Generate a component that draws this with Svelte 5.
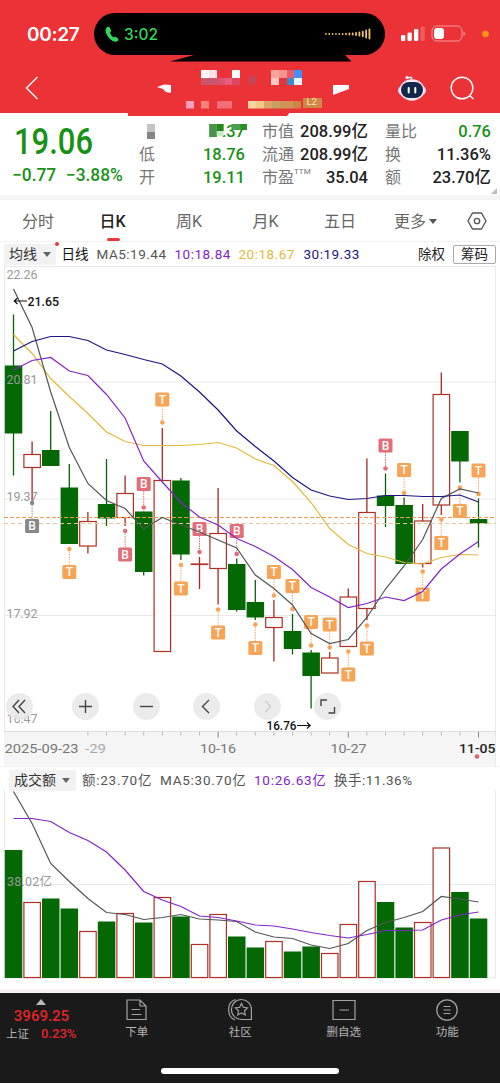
<script>
	const STEP = 18.6;
	const x = (i) => 13.5 + i * STEP;

	// [up, high, top, bottom, low]
	const candles = [
		[0, 314.5, 365.5, 433.5, 475.5],
		[1, 441.5, 454.5, 467.5, 503],
		[0, 411, 450, 466, 466],
		[0, 464, 487.5, 544, 544],
		[1, 512, 521.5, 546, 553.5],
		[0, 459, 504, 518.5, 526],
		[1, 475.5, 493.5, 517.5, 526],
		[0, 511.5, 511.5, 572, 575.5],
		[1, 428, 480.5, 651.5, 651.5],
		[0, 478, 480.5, 554.5, 560],
		[1, 557, 564, 564.5, 589],
		[1, 488, 533.5, 568.5, 604.5],
		[0, 558.5, 564, 610, 611.5],
		[0, 580, 602, 617.5, 620],
		[1, 600, 617.5, 627.5, 661.5],
		[0, 614, 631, 649, 654.5],
		[0, 650, 652.5, 676, 708.5],
		[1, 652, 658, 673, 673],
		[1, 588.5, 597, 646.5, 646.5],
		[1, 458.5, 512.5, 608.5, 620],
		[0, 473.5, 495.5, 506, 527],
		[0, 497.5, 505, 564, 564],
		[1, 504, 521, 563.5, 567.5],
		[1, 372.5, 394.5, 505, 515],
		[0, 431, 431, 461.5, 482.5],
		[0, 498.5, 519, 523.5, 547.5]
	];

	const volumeTops = [
		850, 902.5, 898.5, 908.5, 931.5, 921.5, 913.5, 922.5, 897.5, 916.5, 944.5, 914.5, 936.5,
		947.5, 941.5, 951.5, 946.5, 953.5, 924.5, 881.5, 902, 927.5, 922.5, 848, 892, 918.5
	];

	const priceLines = [
		{ color: '#e3b93c', ys: [334.5, 353.5, 378.5, 396.5, 413.5, 432, 441.5, 445.5, 445.5, 445.5, 444.5, 442.5, 448, 459, 465.5, 481.5, 502.5, 528.5, 544.5, 553.5, 557, 562.5, 564, 557.5, 554.5, 555] },
		{ color: '#555', ys: [289, 327.5, 392, 447.5, 483.5, 500.5, 508.5, 529, 517.5, 525, 532, 540, 548, 575, 588.5, 605, 633.5, 643.5, 639.5, 617.5, 589, 566, 539.5, 498.5, 489, 493] },
		{ color: '#8424cc', ys: [370, 360.5, 357.5, 371, 375.5, 394.5, 418, 461, 482, 502.5, 517, 525, 538.5, 546.5, 556.5, 569.5, 587.5, 597, 607.5, 603.5, 597, 600.5, 591.5, 569, 554, 541.5] },
		{ color: '#1d1583', ys: [351, 341.5, 336.5, 336.5, 340.5, 350, 354.5, 359.5, 364, 376, 392, 410, 431, 446.5, 461, 477.5, 490, 496, 499.5, 498.5, 495.5, 495.5, 496.5, 496.5, 495, 502] }
	];

	const volumeLines = [
		{ color: '#555', ys: [791.5, 823.5, 863.5, 881.5, 898.5, 912.5, 914.5, 919.5, 917.5, 914.5, 919, 920, 921.5, 932, 937, 938.5, 945, 948.5, 943.5, 930.5, 922.5, 917.5, 911.5, 896.5, 899, 902] },
		{ color: '#8424cc', ys: [818.5, 818.5, 821.5, 832.5, 840.5, 852, 870, 891.5, 900, 906.5, 916, 917.5, 921, 925, 926, 929, 932.5, 935.5, 938, 934.5, 930.5, 930.5, 930, 920, 915, 912] }
	];

	// [candle index, label, badge y, dot y]
	const marks = [
		[1, 'B', 526, 503, 'past'],
		[3, 'T', 572, 549],
		[6, 'B', 554.5, 531],
		[7, 'B', 484, 507.5],
		[8, 'T', 399.5, 422.5],
		[9, 'T', 588.5, 565],
		[10, 'B', 529, 552],
		[11, 'T', 632.5, 609.5],
		[12, 'B', 531, 554],
		[13, 'T', 648, 624.5],
		[14, 'T', 572, 595.5],
		[15, 'T', 586, 609],
		[16, 'T', 622, 645.5],
		[17, 'T', 624.5, 647.5],
		[18, 'T', 674.5, 651.5],
		[19, 'T', 648.5, 625.5],
		[20, 'B', 445.5, 468.5],
		[21, 'T', 470, 493],
		[22, 'T', 594.5, 571.5],
		[23, 'T', 543, 519.5],
		[24, 'T', 511, 487.5],
		[25, 'T', 470.5, 494]
	];

	const ticks = Array.from({ length: 22 }, (_, i) => i + 4);
	const points = (ys) => ys.map((y, i) => `${x(i)},${y}`).join(' ');

	// [x, y, width, height, colour]
	const mosaic = [
		[201, 70, 8, 8, '#fff6f5'], [209, 70, 8, 8, '#fde1e6'], [232, 70, 8, 8, '#fff'],
		[201, 78, 16, 7, '#c9566c'], [217, 78, 8, 7, '#d8566c'], [225, 78, 8, 7, '#ed5a80'], [232, 78, 8, 7, '#d9485e'],
		[248, 76, 8, 8, '#c54656'],
		[271, 70, 8, 8, '#f9a29e'], [279, 70, 8, 8, '#f7938d'], [287, 70, 8, 8, '#ed5965'], [294, 70, 8, 8, '#418dfa'],
		[271, 78, 8, 7, '#ffc7bf'], [279, 78, 8, 7, '#e43438'], [287, 78, 8, 7, '#3d88cf'], [294, 78, 8, 7, '#e5f4ff'],
		[186, 101, 8, 7.5, '#f99cc0'], [201, 101, 8, 7.5, '#f4817d'], [217, 101, 15, 7.5, '#f36e78'],
		[248, 101, 8, 7.5, '#fbd2a0'], [256, 101, 8, 7.5, '#f5c787'], [264, 101, 8, 7.5, '#dfa369'],
		[272, 101, 8, 7.5, '#c3a265'], [280, 101, 13, 7.5, '#d19255'], [293, 101, 8, 7.5, '#cd8544'],
		[303, 98, 19, 10, '#cd8947']
	];
</script>

<div class="screen">
	<header>
		<svg class="shards" width="500" height="120">
			<path d="M170 61.5 194 55H345l6.500 6.500Z" fill="#000" />
			<path d="M128 112h162l-3 4H128Z" fill="#eb3236" />
			<path d="M157 87l7-2.500 7 .5v8l-5-1-3-3ZM333 85h16v4l-16 6Z" fill="#fff" />
			{#each mosaic as [mx, my, w, h, fill]}
				<rect x={mx} y={my} width={w} height={h} {fill} />
			{/each}
			<text x="306.500" y="105" class="l2">L2</text>
		</svg>
		<div class="status">
			<span class="clock">00:27</span>
			<div class="island">
				<svg width="14" height="17" viewBox="0 0 14 17"><path d="M1 2.500C2 .5 4 .3 4.800 1.600L6 4.200c.4 1.200-1 1.800-.8 2.800.5 1.700 1.600 3.200 2.900 4.200.9.500 1.600-.8 2.700-.2l2 1.300c1.200.9.4 2.600-1 3.300C7.500 17.500-1.500 8 1 2.500Z" fill="#32d75b" /></svg>
				<span>3:02</span>
				<svg class="wave" width="46" height="12">
					{#each [2, 2, 2, 2, 2, 2, 2.5, 3, 3, 4, 5, 6.5, 9, 11] as h, i}
						<rect x={i * 3.35} y={6 - h / 2} width="1.800" height={h} rx=".9" fill="#f0c36a" />
					{/each}
				</svg>
			</div>
			<svg class="signal" width="90" height="18" viewBox="0 0 90 18">
				<g fill="#fff">
					<rect x="0" y="10" width="4.300" height="6" rx="1.300" />
					<rect x="6.500" y="7.500" width="4.300" height="8.500" rx="1.300" />
					<rect x="13" y="4" width="4.300" height="12" rx="1.300" />
					<rect x="19.500" y="1.500" width="4.300" height="14.500" rx="1.300" opacity=".2" />
					<rect x="33" y="3" width="10" height="11" rx="3" />
					<path d="M62.500 6.500v4.500c2-1 2-3.500 0-4.500" opacity=".5" />
				</g>
				<rect x="31" y="1" width="30" height="15" rx="4.800" fill="none" stroke="#fff" stroke-opacity=".5" />
				<circle cx="84.500" cy="9" r="3.300" fill="#ff9419" />
			</svg>
		</div>
		<nav>
			<svg width="14" height="24" viewBox="0 0 14 24"><path d="M12.500 1 1.500 12l11 11" fill="none" stroke="#fff" stroke-width="1.400" /></svg>
			<div class="tools">
				<svg width="28" height="27" viewBox="0 0 28 27">
					<path d="M9 2.500h4.500v4" fill="none" stroke="#eadff0" stroke-width="1.500" />
					<circle cx="9" cy="2.500" r="1.500" fill="#fff" />
					<rect x="0" y="11" width="28" height="9" rx="4.500" fill="#d9d5ff" />
					<ellipse cx="14" cy="15" rx="12.500" ry="10.700" fill="#f7e9f4" />
					<rect x="3" y="7" width="22" height="16" rx="8" fill="#13274d" />
					<path d="M10.700 13v4.500M17.300 13v4.500" stroke="#fff" stroke-width="2" stroke-linecap="round" />
				</svg>
				<svg width="25" height="25" viewBox="0 0 25 25"><circle cx="12" cy="12" r="10.800" fill="none" stroke="#fff" stroke-width="1.400" /><path d="m19.500 19.500 4 3.500" stroke="#fff" stroke-width="1.400" /></svg>
			</div>
		</nav>
	</header>

	<section class="quote">
		<div class="last down">
			<b>19.06</b>
			<p><span>−0.77</span><span>−3.88%</span></p>
		</div>
		<dl class="range">
			<dt><i class="block"></i></dt>
			<dd class="down masked">.37
				<svg width="40" height="14"><path d="M0 0h8v13H0z" fill="#4b944b" /><path d="M8 0h7v7H8z" fill="#24891f" /><path d="M8 7h7v5H8z" fill="#c6edc7" /><path d="M23 0h9v6h-9z" fill="#4d9d4f" /><path d="M32 0h7v6h-7z" fill="#219121" /></svg>
			</dd>
			<dt>低</dt><dd class="down">18.76</dd>
			<dt>开</dt><dd class="down">19.11</dd>
		</dl>
		<dl class="cap">
			<dt>市值</dt><dd>208.99亿</dd>
			<dt>流通</dt><dd>208.99亿</dd>
			<dt>市盈<sup>TTM</sup></dt><dd>35.04</dd>
		</dl>
		<dl class="turn">
			<dt>量比</dt><dd class="down">0.76</dd>
			<dt>换</dt><dd>11.36%</dd>
			<dt>额</dt><dd>23.70亿</dd>
		</dl>
		<i class="corner"></i>
	</section>

	<div class="tabs">
		<span>分时</span>
		<span class="active">日K</span>
		<span>周K</span>
		<span>月K</span>
		<span>五日</span>
		<span>更多<i></i></span>
		<svg width="20" height="18" viewBox="0 0 20 18"><path d="M5.500 1h9L19 9l-4.500 8h-9L1 9Z" fill="none" stroke="#555" stroke-width="1.400" stroke-linejoin="round" /><circle cx="10" cy="9" r="2.700" fill="none" stroke="#555" stroke-width="1.300" /></svg>
	</div>

	<div class="legend">
		<span class="pick">均线<i></i></span>
		<span class="name">日线</span>
		<span class="ma5">MA5:19.44</span>
		<span class="ma10">10:18.84</span>
		<span class="ma20">20:18.67</span>
		<span class="ma30">30:19.33</span>
		<span class="right">除权</span>
		<span class="chip">筹码</span>
	</div>

	<div class="chart">
		<svg width="500" height="500" viewBox="0 266 500 500">
			<rect x="4" y="731.500" width="492" height="34" fill="#f5f5f5" />
			<path d="M4.500 266v466M495.500 266v500M4 266.500h492M4 382h492M4 499h492M4 615.500h492" stroke="#e9e9e9" fill="none" />
			<path d="M4 731.500h492" stroke="#ddd" />
			{#each candles as [up, high, top, bottom, low], i}
				{#if up}
					<path d="M{x(i)} {high}V{top}M{x(i)} {bottom}V{low}" stroke="#a52a24" stroke-width="1.300" />
					<rect x={x(i) - 8.2} y={top} width="16.500" height={bottom - top} fill="#fff" stroke="#ad2f26" stroke-width="1.200" />
				{:else}
					<path d="M{x(i)} {high}V{low}" stroke="#0a5f0a" stroke-width="1.300" />
					<rect x={x(i) - 8.7} y={top} width="17.500" height={bottom - top} fill="#046804" />
				{/if}
			{/each}
			<path class="now" d="M4 517.500h492" />
			<path class="now cost" d="M4 523.500h492" />
			{#each marks as [i, label, y, dot, past]}
				<g class="mark {label} {past}">
					<path d="M{x(i)} {dot}V{y}" stroke-dasharray="1.500 1" />
					<circle cx={x(i)} cy={dot} r="2.300" />
					<rect x={x(i) - 7} y={y - 7} width="14" height="14" rx="1.500" />
					<text x={x(i)} y={y + 4.2} text-anchor="middle">{label}</text>
				</g>
			{/each}
			{#each priceLines as line}
				<polyline points={points(line.ys)} fill="none" stroke={line.color} stroke-width="1.200" />
			{/each}
			<g class="scale">
				<text x="6.500" y="279" textLength="31">22.26</text>
				<text x="6.500" y="384" textLength="31">20.81</text>
				<text x="6.500" y="501" textLength="31">19.37</text>
				<text x="6.500" y="618" textLength="31">17.92</text>
				<text x="6.500" y="722.500" textLength="31">16.47</text>
			</g>
			<g class="peak">
				<path d="M14.500 301H27M17.500 298l-3.200 3 3.200 3M297 725.500h13M307 722.500l3.200 3-3.200 3" fill="none" stroke="#111" stroke-width="1.200" />
				<text x="27.500" y="305.500" textLength="31.500" lengthAdjust="spacingAndGlyphs">21.65</text>
				<text x="266.500" y="730" textLength="30" lengthAdjust="spacingAndGlyphs">16.76</text>
			</g>
			{#each ticks as i}
				<path d="M{x(i)} 732v{i === 11 || i === 18 || i === 25 ? 5.5 : 3.5}" stroke={i === 11 || i === 18 || i === 25 ? '#888' : '#bbb'} />
			{/each}
			<g class="dates">
				<text x="4.500" y="752.500" textLength="74" lengthAdjust="spacingAndGlyphs">2025-09-23</text>
				<text x="85" y="752.500" textLength="21" lengthAdjust="spacingAndGlyphs" fill="#aaa">-29</text>
				<text x="200" y="752.500" textLength="36" lengthAdjust="spacingAndGlyphs">10-16</text>
				<text x="330.500" y="752.500" textLength="36" lengthAdjust="spacingAndGlyphs">10-27</text>
				<text x="459" y="752.500" textLength="36.500" lengthAdjust="spacingAndGlyphs" class="today">11-05</text>
			</g>
			<circle cx="477" cy="756.500" r="2.300" fill="#e0606a" />
		</svg>
		<div class="controls">
			<button aria-label="first"><svg viewBox="0 0 27 27"><path d="m13 7-6 6.500 6 6.500M19 7l-6 6.500 6 6.500" /></svg></button>
			<button aria-label="zoom in"><svg viewBox="0 0 27 27"><path d="M7 13.500h13M13.500 7v13" /></svg></button>
			<button aria-label="zoom out"><svg viewBox="0 0 27 27"><path d="M7 13.500h13" /></svg></button>
			<button aria-label="previous"><svg viewBox="0 0 27 27"><path d="m16 7-6.500 6.500L16 20" /></svg></button>
			<button aria-label="next" class="off"><svg viewBox="0 0 27 27"><path d="m11.500 8 5 5.500-5 5.500" /></svg></button>
			<button aria-label="full screen"><svg viewBox="0 0 27 27"><path d="M7 13V7h6M14.500 20h6v-6" /></svg></button>
		</div>
	</div>

	<div class="legend volume">
		<span class="pick">成交额<i></i></span>
		<span class="amount">额:23.70亿</span>
		<span class="vol5">MA5:30.70亿</span>
		<span class="vol10">10:26.63亿</span>
		<span class="rate">换手:11.36%</span>
	</div>

	<svg class="bars" width="500" height="203" viewBox="0 790 500 203">
		<path d="M4.500 766v212M495.500 766v212M4 884.500h492M4 978h492" stroke="#e9e9e9" fill="none" />
		<rect x="0" y="989" width="500" height="4" fill="#f6f3f4" />
		{#each volumeTops as top, i}
			{#if candles[i][0]}
				<rect x={x(i) - 8.2} y={top} width="16.500" height={977.5 - top} fill="#fff" stroke="#ad2f26" stroke-width="1.200" />
			{:else}
				<rect x={x(i) - 8.7} y={top} width="17.500" height={978 - top} fill="#046804" />
			{/if}
		{/each}
		{#each volumeLines as line}
			<polyline points={points(line.ys)} fill="none" stroke={line.color} stroke-width="1.200" />
		{/each}
		<text x="7" y="886" textLength="45" class="scale">38.02亿</text>
	</svg>

	<footer>
		<div class="index">
			<i></i>
			<b>3969.25</b>
			<p><span>上证</span><em>0.23%</em></p>
		</div>
		<div class="item">
			<svg viewBox="0 0 24 24"><path d="M2 2h13l6 6v13.500H2ZM15 2v6h6M6.500 11.500H15M6.500 16.500h10" /></svg>
			<span>下单</span>
		</div>
		<div class="item">
			<svg viewBox="0 0 24 24"><path d="M23.400 21.500H13.500a10 10 0 1 1 9.900-10ZM7.500 1.500C-1.500 4-1.500 18.500 7 22" /><path d="m13.500 5.500 1.800 3.800 4.200.6-3 2.900.7 4.200-3.700-2-3.700 2 .7-4.200-3-2.900 4.200-.6Z" /></svg>
			<span>社区</span>
		</div>
		<div class="item">
			<svg viewBox="0 0 24 24"><path d="M1 2.500h22v19H1ZM7.500 12h9.500" /></svg>
			<span>删自选</span>
		</div>
		<div class="item">
			<svg viewBox="0 0 24 24"><circle cx="12" cy="12" r="10.200" /><path d="M8.500 8.500h7M8.500 12h7M8.500 15.500h7" /></svg>
			<span>功能</span>
		</div>
		<div class="home"></div>
	</footer>
</div>

<style>
	:global(body) {
		background: #fff;
	}
	.screen {
		width: 500px;
		height: 1084px;
		overflow: hidden;
		background: #fff;
		color: #333;
		font-family: Roboto, 'Noto Sans CJK SC', sans-serif;
	}
	svg {
		display: block;
		flex: none;
	}
	dl, dd, p {
		margin: 0;
	}
	.down {
		color: #179217;
	}

	header {
		position: relative;
		height: 113px;
		background: #eb3236;
	}
	.shards {
		position: absolute;
		z-index: 1;
		top: 0;
		left: 0;
	}
	.l2 {
		font-size: 9.5px;
		fill: #ffe2b4;
	}
	.status {
		display: flex;
		align-items: center;
		height: 42px;
		padding: 13px 0 0 27px;
	}
	.clock {
		width: 67px;
		color: #fff;
		font: 600 19px Inter, sans-serif;
		letter-spacing: -0.3px;
	}
	.island {
		display: flex;
		align-items: center;
		width: 291px;
		height: 42px;
		padding: 0 14px 0 11px;
		box-sizing: border-box;
		border-radius: 21px;
		background: #000;
		color: #32d75b;
		font: 500 15.5px Inter, sans-serif;
	}
	.island span {
		margin-left: 5px;
	}
	.wave {
		margin-left: auto;
	}
	.signal {
		margin-left: 16px;
	}
	nav {
		display: flex;
		justify-content: space-between;
		align-items: center;
		height: 24px;
		padding: 21px 25px 0 25px;
	}
	.tools {
		display: flex;
		align-items: center;
		gap: 24px;
	}

	.quote {
		position: relative;
		display: flex;
		height: 82px;
		border-bottom: 5px solid #f5f5f5;
		font-size: 16px;
	}
	.last {
		width: 139px;
	}
	.last b {
		display: block;
		margin: 11px 0 0 14px;
		font-size: 36px;
		font-weight: 500;
		line-height: 36px;
		transform: scaleX(0.86);
		transform-origin: left;
	}
	.last p {
		display: flex;
		gap: 10px;
		margin: 5px 0 0 12px;
		font-size: 18px;
		font-weight: 500;
		line-height: 20px;
		transform: scaleX(0.965);
		transform-origin: left;
		white-space: nowrap;
	}
	dl {
		display: grid;
		grid-template-columns: auto 1fr;
		grid-template-rows: 23px 23px 23px;
		margin-top: 7px;
		line-height: 23px;
		white-space: nowrap;
	}
	dt {
		color: #777;
	}
	dd {
		color: #222;
		font-size: 17px;
		font-weight: 500;
		text-align: right;
		transform: scaleX(0.97);
		transform-origin: right;
	}
	dd.down {
		color: #179217;
	}
	.range {
		width: 106px;
	}
	.cap {
		width: 106px;
		margin-left: 17px;
	}
	.turn {
		width: 106px;
		margin-left: 17px;
	}
	sup {
		display: inline-block;
		width: 0;
		font-size: 8px;
		line-height: 0;
		vertical-align: 9px;
	}
	.block {
		display: block;
		width: 8px;
		height: 15px;
		margin: 4px 0 0 8px;
		background: linear-gradient(#c4c4c4 50%, #858585 50%);
	}
	.masked {
		position: relative;
	}
	.masked svg {
		position: absolute;
		right: -3px;
		top: 4px;
	}
	.corner {
		position: absolute;
		right: 3px;
		bottom: 1px;
		border: 3px solid transparent;
		border-right-color: #bbb;
		border-bottom-color: #bbb;
	}

	.tabs {
		display: flex;
		align-items: center;
		height: 41px;
		padding-left: 22px;
		color: #666;
		font-size: 16px;
	}
	.tabs span {
		width: 76.500px;
		padding-top: 2px;
		line-height: 24px;
		white-space: nowrap;
	}
	.tabs .active {
		position: relative;
		margin-left: 1px;
		color: #222;
		font-weight: 500;
	}
	.tabs .active::after {
		content: '';
		position: absolute;
		left: 7px;
		bottom: -7px;
		width: 13px;
		height: 3px;
		border-radius: 2px;
		background: #e6393e;
	}
	.tabs span:nth-child(4) {
		width: 71.500px;
	}
	.tabs span:nth-child(5) {
		width: 70px;
	}
	.tabs span:nth-child(6) {
		width: 73px;
	}
	i {
		display: inline-block;
	}
	.tabs i {
		margin: 0 0 3px 3px;
		border: 4px solid transparent;
		border-top: 5px solid #555;
		border-bottom: 0;
	}

	.legend {
		display: flex;
		align-items: center;
		height: 25px;
		box-sizing: border-box;
		border-top: 1px solid #f1f1f1;
		padding: 0 4px;
		font-size: 13.5px;
		line-height: 20px;
		white-space: nowrap;
	}
	.legend span {
		flex: none;
	}
	.pick {
		position: relative;
		width: 47px;
		height: 21px;
		padding-left: 5px;
		box-sizing: border-box;
		background: #f2f2f2;
		font-size: 14px;
	}
	.pick i {
		margin: 0 0 2px 6px;
		border: 4px solid transparent;
		border-top: 5px solid #666;
		border-bottom: 0;
	}
	.legend:not(.volume) .pick {
		width: 52px;
	}
	.legend:not(.volume) .pick::after {
		content: '';
		position: absolute;
		top: -2px;
		right: -3px;
		width: 4px;
		height: 4px;
		border-radius: 2px;
		background: #e6393e;
	}
	.name {
		width: 35px;
		margin-left: 5.500px;
		color: #111;
	}
	.ma5 {
		width: 78px;
		color: #555;
		letter-spacing: 0.5px;
	}
	.ma10 {
		width: 64px;
		color: #8424cc;
		letter-spacing: 0.5px;
	}
	.ma20 {
		width: 65px;
		color: #e3b93c;
		letter-spacing: 0.5px;
	}
	.ma30 {
		color: #1d1583;
		letter-spacing: 0.5px;
	}
	.right {
		margin-left: auto;
		color: #222;
	}
	.chip {
		width: 41px;
		height: 17px;
		margin-left: 8px;
		border: 1px solid #aaa;
		border-radius: 2px;
		color: #222;
		line-height: 16px;
		text-align: center;
	}

	.chart {
		position: relative;
		height: 500px;
	}
	.scale {
		fill: #999;
		font-size: 12.5px;
	}
	.now {
		stroke: #ee9a50;
		stroke-width: 1;
		stroke-dasharray: 4 2;
	}
	.cost {
		stroke: #e8c49c;
		stroke-dasharray: 4 3;
	}
	.peak {
		font-size: 13px;
		font-weight: 500;
		fill: #111;
	}
	.dates {
		font-size: 13.5px;
		fill: #777;
	}
	.today {
		fill: #222;
		font-weight: 500;
	}
	.mark text {
		fill: #fff;
		font-size: 12px;
		font-weight: 500;
	}
	.T {
		fill: #f8a457;
	}
	.B {
		fill: #e26e79;
	}
	.past {
		fill: #888;
	}
	.mark path {
		stroke: #f1aa75;
	}
	.B path {
		stroke: #d76f7b;
	}
	.past path {
		stroke: #999;
	}
	.controls {
		position: absolute;
		left: 6px;
		top: 427px;
		display: flex;
		gap: 33.400px;
	}
	.controls button {
		width: 27px;
		height: 27px;
		padding: 0;
		border: 0;
		border-radius: 50%;
		background: rgba(232, 232, 232, 0.85);
	}
	.controls button:first-child {
		margin-right: 6px;
	}
	.controls path {
		fill: none;
		stroke: #444;
		stroke-width: 1.4;
	}
	.controls .off path {
		stroke: #ccc;
	}

	.volume {
		height: 24px;
		padding: 3px 4px 0 9px;
	}
	.volume .pick {
		width: 67px;
	}
	.amount {
		width: 78px;
		margin-left: 6px;
		color: #555;
		letter-spacing: 0.75px;
	}
	.vol5 {
		width: 94px;
		color: #555;
		letter-spacing: 0.75px;
	}
	.vol10 {
		width: 80px;
		color: #8424cc;
		letter-spacing: 0.75px;
	}
	.rate {
		color: #555;
		letter-spacing: 0.5px;
	}

	footer {
		position: relative;
		display: flex;
		height: 90px;
		background: #1b1a1b;
		color: #b5b5b5;
		font-size: 11.5px;
	}
	.index {
		width: 85px;
		padding-top: 6px;
		text-align: center;
	}
	.index i {
		display: block;
		width: 0;
		margin: 0 auto 0 36px;
		border: 5px solid transparent;
		border-top: 0;
		border-bottom: 6px solid #bbb;
	}
	.index b {
		display: block;
		margin: 2px 2px 0 0;
		color: #e3252a;
		font-size: 15px;
		font-weight: 500;
		line-height: 18px;
	}
	.index p {
		display: flex;
		align-items: center;
		gap: 12px;
		padding-left: 6px;
		line-height: 18px;
	}
	.index em {
		color: #e3252a;
		font-size: 13px;
		font-style: normal;
		font-weight: 500;
	}
	.item {
		display: flex;
		flex-direction: column;
		align-items: center;
		width: 103.500px;
		padding-top: 5px;
	}
	.item svg {
		width: 24px;
		height: 24px;
		fill: none;
		stroke: #a3a3a3;
		stroke-width: 1.2;
	}
	.item span {
		margin-top: 1px;
		line-height: 18px;
	}
	.home {
		position: absolute;
		left: 161px;
		bottom: 9px;
		width: 178px;
		height: 6px;
		border-radius: 3px;
		background: #fff;
	}
</style>
